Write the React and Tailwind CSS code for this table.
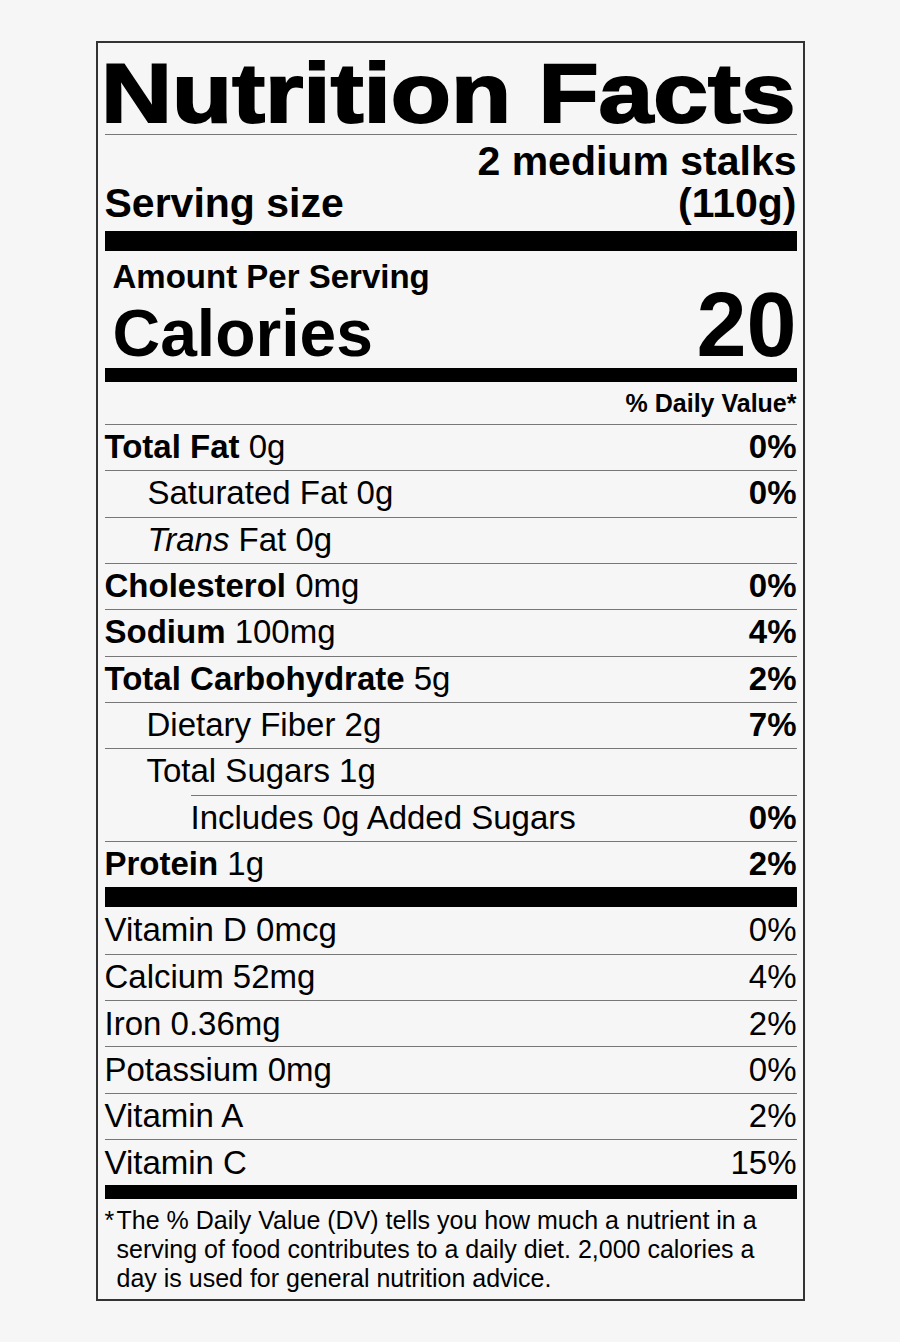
const rows = [
  { b: 'Total Fat', r: ' 0g', dv: '0%' },
  { b: '', r: 'Saturated Fat 0g', dv: '0%', pad: 'pl-[43px]' },
  { trans: true, dv: '', pad: 'pl-[43px]' },
  { b: 'Cholesterol', r: ' 0mg', dv: '0%' },
  { b: 'Sodium', r: ' 100mg', dv: '4%' },
  { b: 'Total Carbohydrate', r: ' 5g', dv: '2%' },
  { b: '', r: 'Dietary Fiber 2g', dv: '7%', pad: 'pl-[42px]' },
  { b: '', r: 'Total Sugars 1g', dv: '', pad: 'pl-[42px]' },
  { b: '', r: 'Includes 0g Added Sugars', dv: '0%', indentLine: true },
  { b: 'Protein', r: ' 1g', dv: '2%' },
];

const vitamins = [
  ['Vitamin D 0mcg', '0%'],
  ['Calcium 52mg', '4%'],
  ['Iron 0.36mg', '2%'],
  ['Potassium 0mg', '0%'],
  ['Vitamin A', '2%'],
  ['Vitamin C', '15%'],
];

function Row({ row }) {
  return (
    <div
      className={
        'flex h-[46.33px] items-center justify-between border-t border-[#777] pb-[2px] text-[33px] leading-none ' +
        (row.indentLine ? 'ml-[86px]' : row.pad || '')
      }
    >
      <span className="whitespace-nowrap">
        {row.trans ? (
          <>
            <i>Trans</i> Fat 0g
          </>
        ) : (
          <>
            {row.b && <b>{row.b}</b>}
            {row.r}
          </>
        )}
      </span>
      <b>{row.dv}</b>
    </div>
  );
}

export default function App() {
  return (
    <div className="min-h-screen bg-[#f6f6f6] pt-[41px]">
      <div className="mx-auto w-[709px] border-2 border-[#333] pl-[7px] pr-[6px] font-['Liberation_Sans',Arial,sans-serif] text-black">
        {/* title */}
        <div className="h-[92px] border-b border-[#777] pt-[9px]">
          <span className="ml-[-4px] inline-block origin-left whitespace-nowrap text-[84px] font-bold leading-[82px] [-webkit-text-stroke:2px_black] [transform:scaleX(1.172)]">
            Nutrition Facts
          </span>
        </div>

        {/* serving */}
        <div className="flex items-end justify-between pb-[7px] pt-[5px] text-[41px] font-bold leading-[42px]">
          <div>Serving size</div>
          <div className="text-right">
            2 medium stalks
            <br />
            (110g)
          </div>
        </div>
        <div className="h-[20px] bg-black" />

        {/* calories */}
        <div className="flex items-end justify-between pt-[4px]">
          <div className="pl-[8px] font-bold">
            <div className="text-[33px] leading-[43px]">Amount Per Serving</div>
            <div className="text-[66px] leading-[70px]">Calories</div>
          </div>
          <div className="text-[90px] font-bold leading-[86px]">20</div>
        </div>
        <div className="h-[14px] bg-black" />

        <div className="h-[42px] text-right text-[25px] font-bold leading-[42px]">% Daily Value*</div>

        {rows.map((r, i) => (
          <Row key={i} row={r} />
        ))}
        <div className="h-[20px] bg-black" />

        {vitamins.map(([name, dv], i) => (
          <div
            key={name}
            className={
              'flex h-[46.33px] items-center justify-between text-[33px] leading-none ' +
              (i > 0 ? 'border-t border-[#777] pb-[1px]' : 'pb-[1px]')
            }
          >
            <span>{name}</span>
            <span>{dv}</span>
          </div>
        ))}
        <div className="h-[14px] bg-black" />

        {/* footnote */}
        <div className="flex pb-[6px] pt-[7px] text-[25px] leading-[29px]">
          <span className="w-[12px] shrink-0">*</span>
          <p className="whitespace-nowrap">
            The % Daily Value (DV) tells you how much a nutrient in a
            <br />
            serving of food contributes to a daily diet. 2,000 calories a
            <br />
            day is used for general nutrition advice.
          </p>
        </div>
      </div>
    </div>
  );
}
